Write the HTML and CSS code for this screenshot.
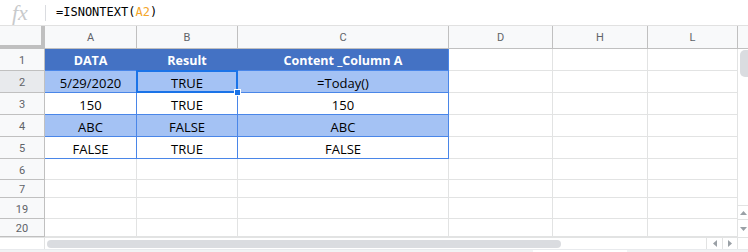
FILE: index.html
```html
<!DOCTYPE html>
<html lang="en">
<head>
    <meta charset="UTF-8">
    <title>ISNONTEXT - Sheets</title>
    <link rel="stylesheet" href="styles.css">
</head>
<body>
    <div class="formula-bar">
        <span class="fx">fx</span>
        <span class="divider"></span>
        <span class="formula">=ISNONTEXT(<span class="ref">A2</span>)</span>
    </div>

    <div class="sheet">
        <div class="vscroll">
            <div class="vthumb"></div>
            <div class="vspace"></div>
            <div class="arrow-box up">
                <svg width="7" height="4" viewBox="0 0 7 4"><polygon points="0,4 7,4 3.5,0" fill="#9aa0a6"/></svg>
            </div>
            <div class="arrow-box down">
                <svg width="7" height="4" viewBox="0 0 7 4"><polygon points="0,0 7,0 3.5,4" fill="#9aa0a6"/></svg>
            </div>
        </div>

        <!-- column headers -->
        <div class="corner"></div>
        <div class="col-head">A</div>
        <div class="col-head">B</div>
        <div class="col-head">C</div>
        <div class="col-head">D</div>
        <div class="col-head">H</div>
        <div class="col-head">L</div>
        <div class="col-head end"></div>

        <!-- row 1 -->
        <div class="row-head">1</div>
        <div class="cell data title">DATA</div>
        <div class="cell data title">Result</div>
        <div class="cell data title last">Content _Column A</div>
        <div class="cell"></div>
        <div class="cell"></div>
        <div class="cell"></div>

        <!-- row 2 -->
        <div class="row-head active">2</div>
        <div class="cell data shade">5/29/2020</div>
        <div class="cell data shade selected">TRUE<span class="handle"></span></div>
        <div class="cell data shade">=Today()</div>
        <div class="cell"></div>
        <div class="cell"></div>
        <div class="cell"></div>

        <!-- row 3 -->
        <div class="row-head">3</div>
        <div class="cell data">150</div>
        <div class="cell data">TRUE</div>
        <div class="cell data">150</div>
        <div class="cell"></div>
        <div class="cell"></div>
        <div class="cell"></div>

        <!-- row 4 -->
        <div class="row-head">4</div>
        <div class="cell data shade">ABC</div>
        <div class="cell data shade">FALSE</div>
        <div class="cell data shade">ABC</div>
        <div class="cell"></div>
        <div class="cell"></div>
        <div class="cell"></div>

        <!-- row 5 -->
        <div class="row-head">5</div>
        <div class="cell data">FALSE</div>
        <div class="cell data">TRUE</div>
        <div class="cell data">FALSE</div>
        <div class="cell"></div>
        <div class="cell"></div>
        <div class="cell"></div>

        <!-- empty rows -->
        <div class="row-head">6</div>
        <div class="cell"></div><div class="cell"></div><div class="cell"></div>
        <div class="cell"></div><div class="cell"></div><div class="cell"></div>

        <div class="row-head">7</div>
        <div class="cell"></div><div class="cell"></div><div class="cell"></div>
        <div class="cell"></div><div class="cell"></div><div class="cell"></div>

        <div class="row-head">19</div>
        <div class="cell"></div><div class="cell"></div><div class="cell"></div>
        <div class="cell"></div><div class="cell"></div><div class="cell"></div>

        <div class="row-head">20</div>
        <div class="cell"></div><div class="cell"></div><div class="cell"></div>
        <div class="cell"></div><div class="cell"></div><div class="cell"></div>
    </div>

    <div class="hscroll">
        <div class="hspacer"></div>
        <div class="htrack"><div class="hthumb"></div></div>
        <div class="arrow-box left">
            <svg width="4" height="7" viewBox="0 0 4 7"><polygon points="4,0 4,7 0,3.5" fill="#9aa0a6"/></svg>
        </div>
        <div class="arrow-box right">
            <svg width="4" height="7" viewBox="0 0 4 7"><polygon points="0,0 0,7 4,3.5" fill="#9aa0a6"/></svg>
        </div>
        <div class="hcorner"></div>
    </div>
    <div class="tab-strip"><span class="tab"></span></div>
</body>
</html>
```

FILE: styles.css
```css
* {
    box-sizing: border-box;
}
body {
    margin: 0;
    background: #fff;
    font-family: "Open Sans", Lato, sans-serif;
    width: 748px;
    height: 252px;
    overflow: hidden;
}

/* formula bar */
.formula-bar {
    display: flex;
    align-items: center;
    height: 26px;
    border-bottom: 1px solid #e1e1e1;
}
.fx {
    width: 45px;
    padding-left: 12px;
    font-family: "Liberation Serif", serif;
    font-style: italic;
    font-size: 22px;
    line-height: 20px;
    color: #c8cacc;
}
.divider {
    width: 1px;
    height: 16px;
    background: #dadce0;
    margin-right: 10px;
}
.formula {
    font-family: "DejaVu Sans Mono", monospace;
    font-size: 12px;
    color: #000;
    margin-top: -2px;
}
.ref {
    color: #f4a62a;
}

/* grid */
.sheet {
    display: grid;
    grid-template-columns: 45px 92px 101px 211px 104px 95px 90px 10px;
    grid-template-rows: 23px 22px 22px 22px 22px 22px 21px 18px 21px 18px;
}
.corner {
    background: #f8f9fa;
    border-right: 4px solid #c0c0c0;
    border-bottom: 4px solid #c0c0c0;
}
.col-head {
    background: #f8f9fa;
    border-right: 1px solid #c0c0c0;
    border-bottom: 1px solid #c0c0c0;
    color: #5f6368;
    font-family: Roboto, sans-serif;
    font-size: 11px;
    display: flex;
    align-items: center;
    justify-content: center;
}
.col-head.end {
    border-right: none;
}
.row-head {
    background: #f8f9fa;
    border-right: 1px solid #c0c0c0;
    border-bottom: 1px solid #c0c0c0;
    color: #5f6368;
    font-family: Roboto, sans-serif;
    font-size: 11px;
    display: flex;
    align-items: center;
    justify-content: center;
    padding-top: 2px;
}
.row-head.active {
    background: #e8eaed;
}
.cell {
    border-right: 1px solid #e2e3e3;
    border-bottom: 1px solid #e2e3e3;
    display: flex;
    align-items: center;
    justify-content: center;
    font-size: 13px;
    color: #000;
    padding-top: 2px;
}
.cell.data {
    border-right-color: #4a86e8;
    border-bottom-color: #4a86e8;
}
.cell.title {
    background: #4472c4;
    color: #fff;
    font-weight: bold;
    font-size: 12.5px;
    border-right-color: #4472c4;
}
.cell.title.last {
    border-right-color: #4a86e8;
}
.cell.shade {
    background: #a4c2f4;
}
.selected {
    position: relative;
}
.selected::after {
    content: "";
    position: absolute;
    left: -1px;
    top: -1px;
    right: -1px;
    bottom: -1px;
    border: 2px solid #1a73e8;
}
.handle {
    position: absolute;
    right: -4px;
    bottom: -4px;
    width: 7px;
    height: 7px;
    background: #1a73e8;
    border: 1px solid #fff;
    z-index: 1;
}

/* vertical scrollbar */
.vscroll {
    grid-column: 8;
    grid-row: 2 / -1;
    display: flex;
    flex-direction: column;
    background: #fff;
}
.vthumb {
    margin: 1px 0 0 2px;
    width: 9px;
    height: 27px;
    background: #dadce0;
    border-radius: 5px 0 0 5px;
}
.vspace {
    flex: 1;
}
.arrow-box {
    display: flex;
    align-items: center;
    justify-content: center;
    background: #fff;
}
.arrow-box.up {
    height: 15px;
    border-top: 1px solid #e2e3e3;
    border-bottom: 1px solid #e2e3e3;
}
.arrow-box.down {
    height: 17px;
}

/* horizontal scrollbar */
.hscroll {
    display: flex;
    height: 12px;
    border-top: 1px solid #e2e3e3;
}
.hspacer {
    width: 45px;
    border-right: 1px solid #e2e3e3;
}
.htrack {
    flex: 1;
    padding: 2px 0 0 2px;
}
.hthumb {
    width: 514px;
    height: 8px;
    background: #dadce0;
    border-radius: 4px;
}
.arrow-box.left,
.arrow-box.right {
    width: 16px;
    border-left: 1px solid #e2e3e3;
}
.arrow-box.right {
    width: 15px;
}
.hcorner {
    width: 11px;
    border-left: 1px solid #e2e3e3;
}
.tab-strip {
    height: 3px;
    background: #f1f3f4;
    border-top: 1px solid #e8eaed;
}
.tab {
    display: block;
    margin-left: 533px;
    width: 94px;
    height: 2px;
    background: #fff;
}
```
